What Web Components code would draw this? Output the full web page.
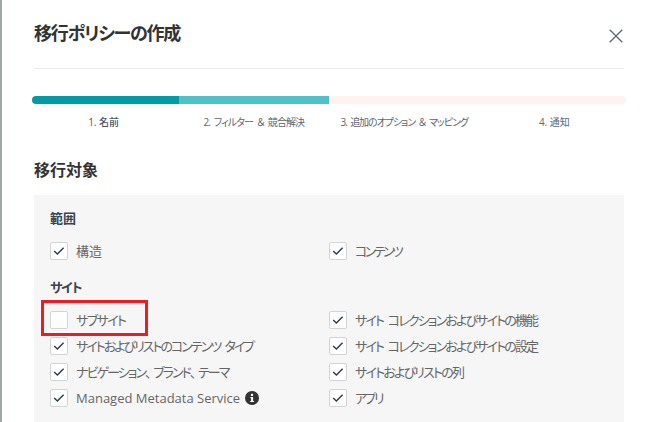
<!DOCTYPE html>
<html lang="ja"><head><meta charset="utf-8"><style>
html,body{margin:0;height:422px;overflow:hidden;background:#fff}
body{font-family:"Open Sans","Noto Sans CJK JP",sans-serif;font-feature-settings:"palt"}
</style></head><body>
<policy-dialog></policy-dialog>
<script>
const def=(name,html,init)=>customElements.define(name,class extends HTMLElement{
  constructor(){super();this.attachShadow({mode:'open'}).innerHTML=html;}
  connectedCallback(){init&&init(this)}
});
def('check-box',`<style>
:host{display:flex;align-items:center;height:26px;gap:8px;color:#666;font-size:13px;white-space:nowrap}
.b{width:16px;height:16px;border:1px solid #d4d4d4;border-radius:2px;background:#fff;display:flex;align-items:center;justify-content:center;flex:none}
svg{width:12px;height:10px;display:block}
.t{line-height:18px;letter-spacing:var(--ls,0);word-spacing:var(--ws,0)}
:host([unchecked]) svg{display:none}
</style><span class="b"><svg viewBox="0 0 12 10"><path d="M1.2 5 L4.4 8 L10.6 1.8" fill="none" stroke="#2b3a4a" stroke-width="1.4"/></svg></span><span class="t"><slot></slot></span>`);
def('info-icon',`<style>:host{display:inline-block;width:14px;height:14px;margin-left:5px;vertical-align:-2px}svg{display:block}</style>
<svg width="14" height="14" viewBox="0 0 14 14"><circle cx="7" cy="7" r="7" fill="#333"/><rect x="5.9" y="2.8" width="2.2" height="2.1" fill="#fff"/><path d="M5.4 6h2.7v3.9h.9v1.2H5.2V9.9h.9V7.2h-.7z" fill="#fff"/></svg>`);
def('step-bar',`<style>
:host{display:block;margin:27px -2px 0 -2px}
.bar{display:flex;height:8px;border-radius:4px;overflow:hidden;background:#fdf3f1}
.a{width:147px;background:#009ca6}.b{width:150px;background:#50c0c9}
.l{display:grid;grid-template-columns:repeat(4,150.25px);margin:10px 0 0 -3.5px;font-size:10px;line-height:16px;color:#5d6670;text-align:center;white-space:nowrap}
.n{font-weight:500;color:#4c5560}
.s2{letter-spacing:-.9px;word-spacing:2px}.s3{letter-spacing:-1.1px;word-spacing:2px}
</style><div class="bar"><div class="a"></div><div class="b"></div></div>
<div class="l"><span class="n">1. 名前</span><span class="s2">2. フィルター ＆ 競合解決</span><span class="s3">3. 追加のオプション ＆ マッピング</span><span>4. 通知</span></div>`);
def('option-panel',`<style>
:host{display:block;background:#f6f6f6;margin-top:13px;padding:14px 16px 0;height:240px;box-sizing:border-box}
h3{margin:0;font-size:13px;line-height:18px;font-weight:600;color:#3a4550}
.k{letter-spacing:-1.2px}
.g{display:grid;grid-template-columns:279px 1fr}
.s1{margin-top:11px}
h3.two{margin-top:14px}
.s2{margin-top:11px}
.c{letter-spacing:1.6px}
</style>
<h3>範囲</h3>
<div class="g s1"><check-box>構造</check-box><check-box style="--ls:-2.6px">コンテンツ</check-box></div>
<h3 class="two"><span class="k">サイト</span></h3>
<div class="g s2">
<check-box unchecked style="--ls:-1.6px">サブサイト</check-box><check-box style="--ls:-1.85px;--ws:3px">サイト コレクションおよびサイトの機能</check-box>
<check-box style="--ls:-2px;--ws:3px">サイトおよびリストのコンテンツ タイプ</check-box><check-box style="--ls:-1.85px;--ws:3px">サイト コレクションおよびサイトの設定</check-box>
<check-box style="--ls:-1.95px">ナビゲーション<span class="c">、</span>ブランド<span class="c">、</span>テーマ</check-box><check-box style="--ls:-1.8px">サイトおよびリストの列</check-box>
<check-box>Managed Metadata Service<info-icon></info-icon></check-box><check-box style="--ls:-2.6px">アプリ</check-box>
</div>`);
def('highlight-box',`<style>:host{position:absolute;left:39px;top:300px;width:107px;height:36px;box-sizing:border-box;border:3px solid #ed1c24}</style>`);
def('policy-dialog',`<style>
:host{display:block;position:relative;height:422px;box-sizing:border-box;padding:0 23px 0 32px;border-left:2px solid #a3a6aa;overflow:hidden}
header{display:flex;justify-content:space-between;align-items:center;height:68px;border-bottom:1px solid #eaeaea}
h1{margin:-3px 0 0;font-size:18px;font-weight:700;color:#333;line-height:24px;letter-spacing:-1.2px}
svg{display:block;margin:3px 1px 0 0}
h2{margin:28px 0 0;font-size:16px;line-height:24px;font-weight:600;color:#333}
</style>
<header><h1>移行ポリシーの作成</h1><svg width="14" height="14" viewBox="0 0 14 14"><path d="M.7.7l12.6 12.6M13.3.7L.7 13.3" stroke="#5b6670" stroke-width="1.3" fill="none"/></svg></header>
<step-bar></step-bar>
<h2>移行対象</h2>
<option-panel></option-panel>
<highlight-box></highlight-box>`);
</script>
</body></html>
